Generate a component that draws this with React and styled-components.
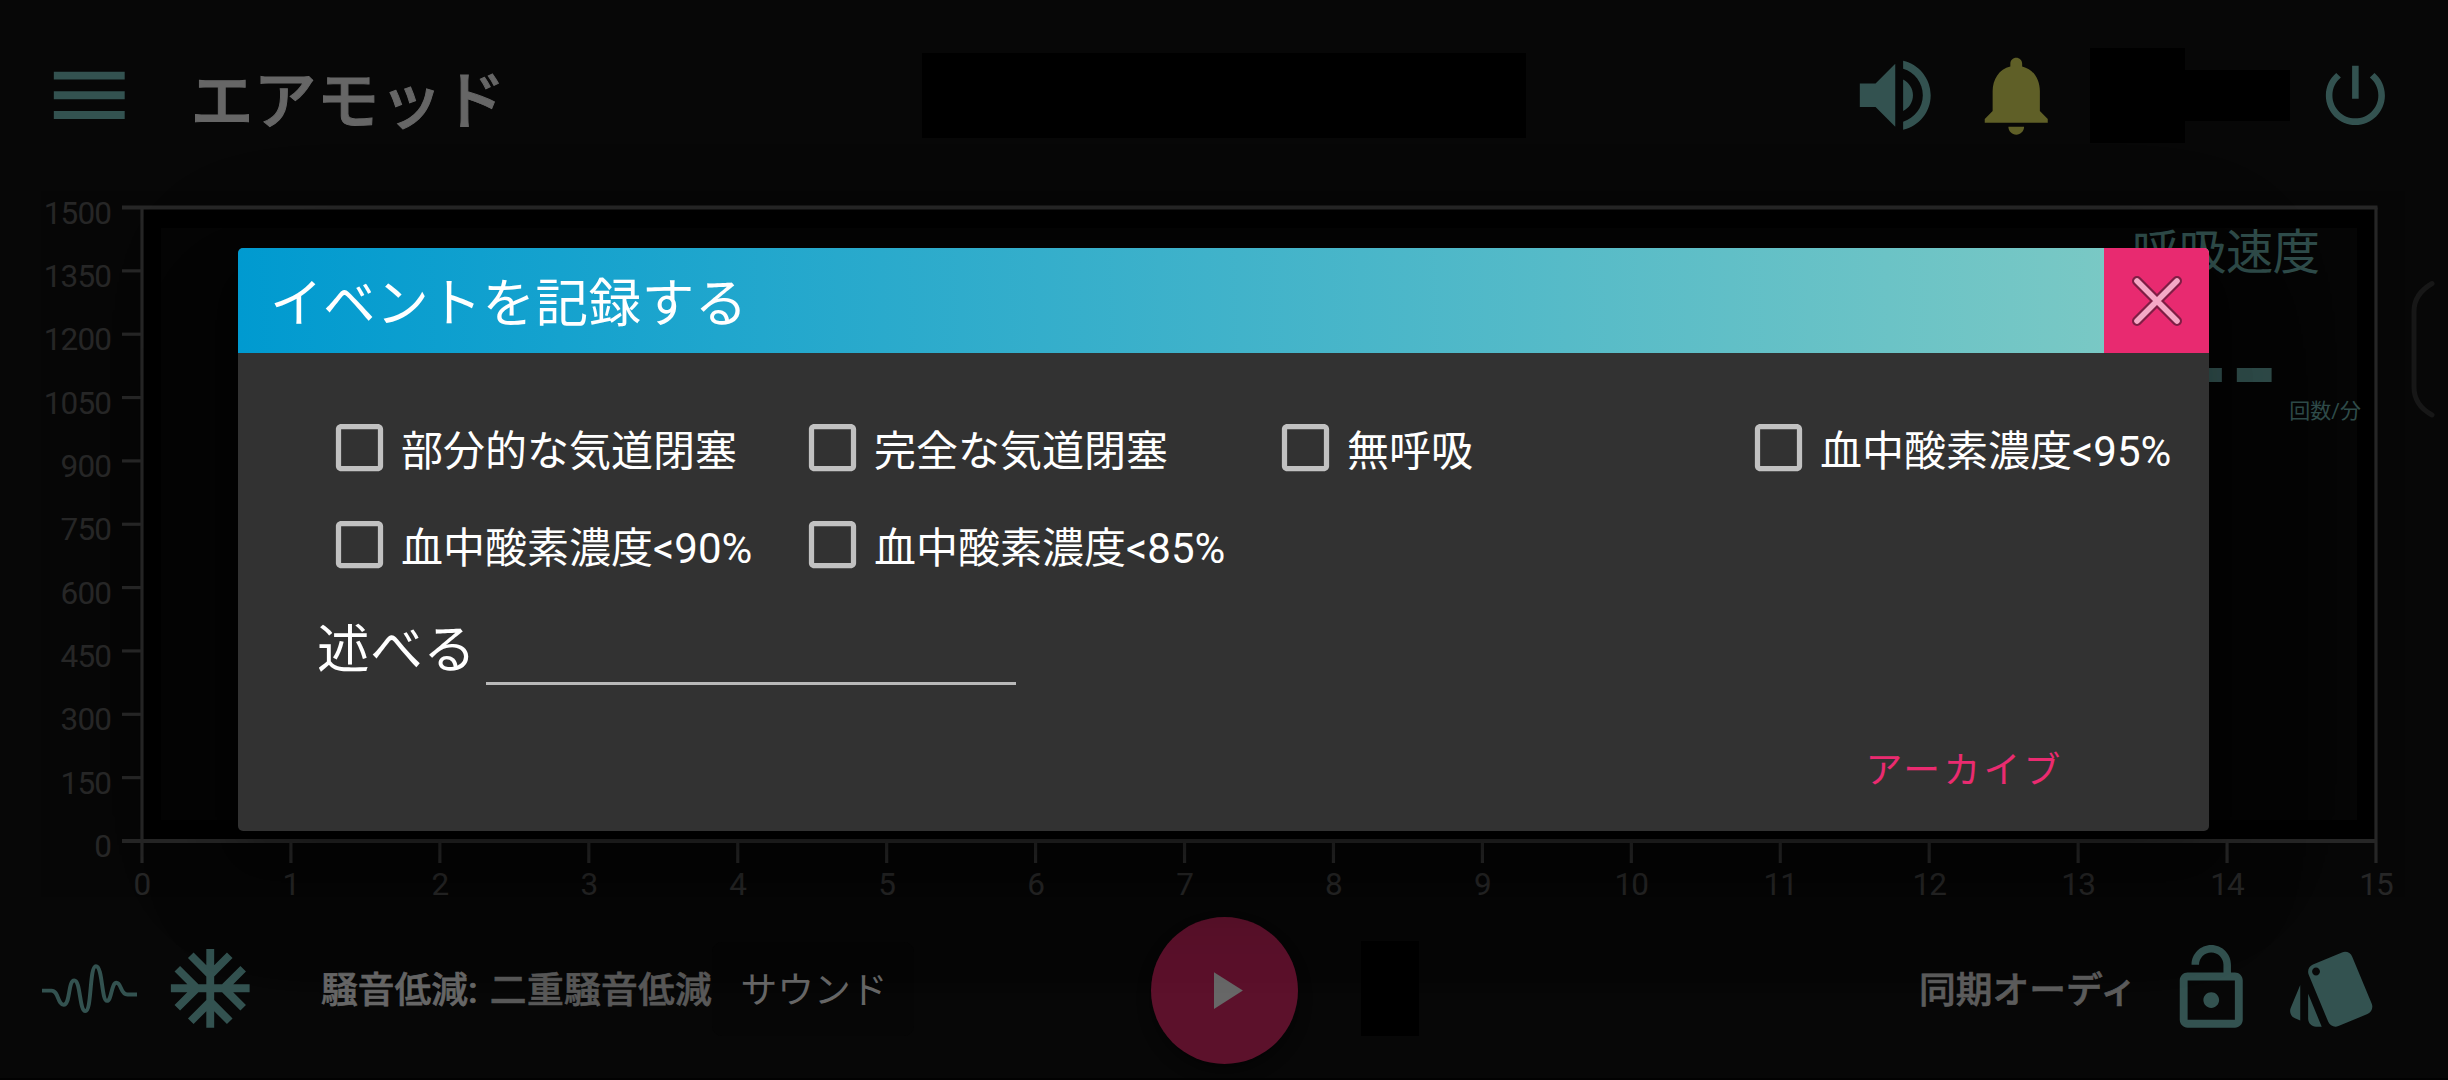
import React from "react";
import styled, { createGlobalStyle } from "styled-components";

const TEAL = "#335250";
const AXIS = "#262626";

const GlobalStyle = createGlobalStyle`
  * { box-sizing: border-box; }
  body {
    margin: 0;
    background: #070707;
    font-family: Roboto, "Noto Sans CJK JP", sans-serif;
    overflow: hidden;
  }
`;

const Screen = styled.div`
  position: relative;
  display: flex;
  flex-direction: column;
  width: 2448px;
  height: 1080px;
  background: #070707;
  border-bottom: 2px solid #020202;
  overflow: hidden;
`;

const Icon = styled.svg.attrs({ viewBox: "0 0 24 24" })`
  display: block;
  flex: none;
  width: ${(p) => p.$size || 94.5}px;
  height: ${(p) => p.$size || 94.5}px;
  margin-left: ${(p) => p.$gap || 0}px;
  fill: ${(p) => p.$color || TEAL};
`;

const TopBar = styled.header`
  display: flex;
  align-items: center;
  height: 191px;
  padding-left: 42px;
`;

const AppTitle = styled.h1`
  width: 731px;
  margin: 0 0 0 54px;
  padding-top: 12px;
  font-size: 63px;
  line-height: 90px;
  font-weight: 500;
  -webkit-text-stroke: 1px #666;
  color: #666;
  white-space: nowrap;
`;

const Blank = styled.div`
  flex: none;
  width: ${(p) => p.$w}px;
  height: ${(p) => p.$h}px;
  margin-left: ${(p) => p.$gap || 0}px;
  background: #000;
`;

const ChartArea = styled.section`
  position: relative;
  height: 706px;
`;

const ChartSvg = styled.svg`
  display: block;
  width: 2448px;
  height: 706px;
  overflow: visible;
  font-size: 31.5px;
  font-weight: 400;
  letter-spacing: -0.9px;
`;

const Readout = styled.div`
  position: absolute;
  top: 27px;
  right: 87px;
  width: 230px;
  color: #2f4c4a;
`;

const ReadoutName = styled.div`
  padding-left: 1px;
  font-size: 47.25px;
  line-height: 70px;
  font-weight: 400;
  letter-spacing: -0.3px;
  white-space: nowrap;
`;

const ReadoutValue = styled.div`
  padding: 20px 0 0 49px;
  font-size: 126px;
  line-height: 126px;
  font-weight: 700;
`;

const ReadoutUnit = styled.div`
  margin-top: -38px;
  text-align: right;
  font-size: 21px;
  line-height: 30px;
`;

const Drawer = styled.svg`
  position: absolute;
  left: 2406px;
  top: 275px;
  width: 32px;
  height: 150px;
`;

const BottomBar = styled.footer`
  display: flex;
  align-items: center;
  height: 181px;
  padding: 2px 0 0 42px;
`;

const StatusText = styled.div`
  flex: none;
  width: ${(p) => p.$w}px;
  margin-left: ${(p) => p.$gap}px;
  padding-top: 5px;
  font-size: 36.75px;
  line-height: 54px;
  font-weight: 500;
  -webkit-text-stroke: 0.7px currentColor;
  color: ${(p) => p.$color || "#5c5c5c"};
  white-space: nowrap;
`;

const StatusValue = styled.span`
  margin-left: 3px;
  letter-spacing: 0.3px;
  color: #585858;
`;

const SoundButton = styled.button`
  flex: none;
  width: 202px;
  height: 94px;
  margin-left: 0;
  padding: 5px 0 0 2px;
  border: 0;
  border-radius: 10px;
  background: #060606;
  font: 400 36.75px/54px Roboto, "Noto Sans CJK JP", sans-serif;
  color: #666;
  white-space: nowrap;
`;

const PlayButton = styled.button`
  display: flex;
  align-items: center;
  justify-content: center;
  flex: none;
  width: 147px;
  height: 147px;
  margin: 4px 0 0 237px;
  padding: 0;
  border: 0;
  border-radius: 50%;
  background: #5c112b;
  box-shadow: 0 8px 14px rgba(0, 0, 0, 0.4);
`;

const Overlay = styled.div`
  position: absolute;
  inset: 0;
  display: flex;
  align-items: flex-start;
  justify-content: center;
  padding: 248px 1px 0 0;
`;

const Dialog = styled.div`
  display: flex;
  flex-direction: column;
  width: 1971px;
  height: 583px;
  border-radius: 5px;
  background: #323232;
  overflow: hidden;
  box-shadow: 0 29px 39px -18px rgba(0, 0, 0, 0.2),
    0 63px 100px 8px rgba(0, 0, 0, 0.14), 0 24px 121px 21px rgba(0, 0, 0, 0.12);
`;

const DialogHeader = styled.div`
  display: flex;
  align-items: center;
  justify-content: space-between;
  flex: none;
  height: 105px;
  padding-left: 32px;
  background: linear-gradient(88deg, #009ad0 0%, #80cbc4 100%);
`;

const DialogTitle = styled.h2`
  margin: 0;
  padding-top: 7px;
  font-size: 52.5px;
  line-height: 84px;
  font-weight: 400;
  letter-spacing: 0.6px;
  color: #fff;
`;

const CloseButton = styled.button`
  display: flex;
  align-items: center;
  justify-content: center;
  width: 105px;
  height: 105px;
  padding: 0;
  border: 0;
  background: #e82a70;
`;

const CloseIcon = styled.svg`
  display: block;
  width: 60px;
  height: 60px;
`;

const DialogBody = styled.div`
  display: flex;
  flex-direction: column;
  flex: 1;
  padding: 47px 0 0 79px;
  color: #fff;
`;

const OptionGrid = styled.div`
  display: grid;
  grid-template-columns: repeat(4, 473px);
  grid-auto-rows: 97px;
`;

const Option = styled.label`
  display: flex;
  align-items: center;
  height: 95px;
  padding-left: 10.5px;
  font-size: 42px;
  line-height: 60px;
  white-space: nowrap;
`;

const OptionText = styled.span`
  padding: 8px 0 0 10.5px;
`;

const DescribeRow = styled.div`
  display: flex;
  align-items: flex-start;
  height: 92px;
`;

const DescribeLabel = styled.div`
  width: 169px;
  padding-top: 18px;
  font-size: 52.5px;
  line-height: 76px;
  letter-spacing: 0.0125em;
  white-space: nowrap;
`;

const DescribeInput = styled.input`
  width: 530px;
  height: 91px;
  padding: 0;
  border: 0;
  border-bottom: 3px solid #b9b9b9;
  background: transparent;
  color: #fff;
  font-size: 42px;
  outline: none;
`;

const Actions = styled.div`
  display: flex;
  justify-content: flex-end;
  padding: 58px 145.5px 0 0;
`;

const ArchiveButton = styled.button`
  padding: 0;
  border: 0;
  background: transparent;
  font: 400 36.75px/54px Roboto, "Noto Sans CJK JP", sans-serif;
  letter-spacing: 0.0892857em;
  color: #ea2b70;
`;

const OPTIONS = [
  "部分的な気道閉塞",
  "完全な気道閉塞",
  "無呼吸",
  "血中酸素濃度<95%",
  "血中酸素濃度<90%",
  "血中酸素濃度<85%",
];

const X0 = 142;
const X1 = 2376;
const Y0 = 650;
const Y1 = 16.5;

function Chart() {
  const xs = Array.from({ length: 16 }, (_, i) => X0 + (i * (X1 - X0)) / 15);
  const ys = Array.from({ length: 11 }, (_, i) => Y0 - (i * (Y0 - Y1)) / 10);
  return (
    <ChartSvg viewBox="0 0 2448 706">
      <rect x="41" y="0" width="2364" height="706" fill="#060606" />
      <rect x={X0} y={Y1} width={X1 - X0} height={Y0 - Y1} fill="#000" />
      <rect x="161" y="37" width="2196" height="592" fill="#050505" />
      <g stroke={AXIS} strokeWidth="3.2">
        <path d={`M${X0} ${Y1}V672M${X1} ${Y1}V672`} />
        <path d={`M122 ${Y1}H${X1 + 1.5}M122 ${Y0}H${X1}`} strokeWidth="3.8" />
        {xs.slice(1, 15).map((x) => (
          <path key={x} d={`M${x} ${Y0}V672`} />
        ))}
        {ys.slice(1, 10).map((y) => (
          <path key={y} d={`M122 ${y}H${X0}`} />
        ))}
      </g>
      <g fill={AXIS}>
        {ys.map((y, i) => (
          <text key={i} x="111" y={y + 16} textAnchor="end">
            {i * 150}
          </text>
        ))}
        {xs.map((x, i) => (
          <text key={i} x={x} y="704" textAnchor="middle">
            {i}
          </text>
        ))}
      </g>
    </ChartSvg>
  );
}

export default function App() {
  return (
    <>
      <GlobalStyle />
      <Screen>
        <TopBar>
          <Icon>
            <path d="M3 18h18v-2H3v2zm0-5h18v-2H3v2zm0-7v2h18V6H3z" />
          </Icon>
          <AppTitle>エアモッド</AppTitle>
          <Blank $w={604} $h={85} />
          <Icon $gap={322.5}>
            <path d="M3 9v6h4l5 5V4L7 9H3zm13.500 3c0-1.770-1.020-3.290-2.500-4.030v8.050c1.480-.730 2.500-2.250 2.500-4.020zM14 3.230v2.060c2.890.860 5 3.540 5 6.710s-2.110 5.850-5 6.710v2.060c4.010-.910 7-4.490 7-8.770s-2.990-7.860-7-8.770z" />
          </Icon>
          <Icon $gap={26.5} $color="#5f5f27">
            <path d="M12 22c1.100 0 2-.900 2-2h-4c0 1.100.890 2 2 2zm6-6v-5c0-3.070-1.640-5.640-4.500-6.320V4c0-.830-.670-1.500-1.500-1.500s-1.500.670-1.500 1.500v.680C7.630 5.360 6 7.920 6 11v5l-2 2v1h16v-1l-2-2z" />
          </Icon>
          <Blank $w={95} $h={95} $gap={26} />
          <Blank $w={105} $h={51} />
          <Icon $size={78.75} $gap={26}>
            <path d="M13 3h-2v10h2V3zm4.830 2.170l-1.420 1.420C17.990 7.860 19 9.810 19 12c0 3.870-3.130 7-7 7s-7-3.130-7-7c0-2.190 1.010-4.140 2.580-5.420L6.170 5.170C4.230 6.820 3 9.260 3 12c0 4.970 4.030 9 9 9s9-4.030 9-9c0-2.740-1.230-5.180-3.170-6.830z" />
          </Icon>
        </TopBar>

        <ChartArea>
          <Chart />
          <Readout>
            <ReadoutName>呼吸速度</ReadoutName>
            <ReadoutValue>--</ReadoutValue>
            <ReadoutUnit>回数/分</ReadoutUnit>
          </Readout>
        </ChartArea>

        <BottomBar>
          <Icon>
            <path
              d="M0.400 12.600H2.700C4.500 12.600 4.300 16.200 5.800 16.200C7.500 16.200 6.900 10 8.500 10C10.100 10 9.800 17.800 11.300 17.800C13 17.800 12.300 6.400 14 6.400C15.700 6.400 15.400 15.200 16.800 15.200C18 15.200 17.900 10.600 19.200 10.600C20.500 10.600 20.200 13.600 22 13.600H24.300"
              transform="translate(-0.300 0)"
              fill="none"
              stroke={TEAL}
              strokeWidth="1"
              strokeLinecap="round"
            />
          </Icon>
          <Icon $gap={26}>
            <path d="M22 11h-4.170l3.240-3.240-1.410-1.420L15 11h-2V9l4.660-4.660-1.420-1.410L13 6.170V2h-2v4.170L7.760 2.930 6.340 4.340 11 9v2H9L4.340 6.340 2.930 7.760 6.170 11H2v2h4.170l-3.240 3.240 1.410 1.420L9 13h2v2l-4.660 4.660 1.420 1.410L11 17.830V22h2v-4.170l3.240 3.240 1.420-1.410L13 15v-2h2l4.660 4.660 1.410-1.420L17.830 13H22z" />
          </Icon>
          <StatusText $w={391} $gap={64} $color="#666">
            騒音低減: <StatusValue>二重騒音低減</StatusValue>
          </StatusText>
          <SoundButton>サウンド</SoundButton>
          <PlayButton>
            <Icon $size={63} $color="#676767">
              <path d="M8 5v14l11-7z" />
            </Icon>
          </PlayButton>
          <Blank $w={58} $h={95} $gap={63} />
          <StatusText $w={223} $gap={500}>
            同期オーディ
          </StatusText>
          <Icon $gap={22}>
            <path d="M12 17c1.100 0 2-.900 2-2s-.900-2-2-2-2 .900-2 2 .900 2 2 2zm6-9h-1V6c0-2.760-2.240-5-5-5S7 3.240 7 6h1.900c0-1.710 1.390-3.100 3.100-3.100 1.710 0 3.100 1.390 3.100 3.100v2H6c-1.100 0-2 .900-2 2v10c0 1.100.900 2 2 2h12c1.100 0 2-.900 2-2V10c0-1.100-.900-2-2-2zm0 12H6V10h12v10z" />
          </Icon>
          <Icon $gap={26}>
            <path d="M2.530 19.650l1.340.560v-9.030l-2.430 5.860c-.410 1.020.080 2.190 1.090 2.610zm19.500-3.700L17.070 3.980c-.310-.750-1.040-1.210-1.810-1.230-.260 0-.530.040-.790.150L7.100 5.950c-.750.310-1.210 1.030-1.230 1.800-.010.270.040.540.150.800l4.960 11.970c.310.760 1.050 1.220 1.830 1.230.260 0 .520-.050.770-.150l7.360-3.050c1.020-.420 1.510-1.590 1.090-2.600zM7.880 8.750c-.550 0-1-.450-1-1s.450-1 1-1 1 .450 1 1-.450 1-1 1zm-2 11c0 1.100.900 2 2 2h1.450l-3.450-8.340v6.340z" />
          </Icon>
        </BottomBar>

        <Drawer viewBox="0 0 32 150">
          <path
            d="M26 8.500C15 15 8 23 8 36V112C8 125 15 134 26 140"
            fill="none"
            stroke="#171717"
            strokeWidth="5"
            strokeLinecap="round"
          />
        </Drawer>

        <Overlay>
          <Dialog>
            <DialogHeader>
              <DialogTitle>イベントを記録する</DialogTitle>
              <CloseButton>
                <CloseIcon viewBox="0 0 60 60" fill="none" strokeLinecap="round">
                  <path d="M10 10L50 50M50 10L10 50" stroke="#7f1e45" strokeWidth="10" />
                  <path d="M10 10L50 50M50 10L10 50" stroke="#f5a9c6" strokeWidth="5.600" />
                </CloseIcon>
              </CloseButton>
            </DialogHeader>
            <DialogBody>
              <OptionGrid>
                {OPTIONS.map((name) => (
                  <Option key={name}>
                    <Icon $size={63} $color="#c1c1c1">
                      <path d="M19 5v14H5V5h14m0-2H5c-1.100 0-2 .900-2 2v14c0 1.100.900 2 2 2h14c1.100 0 2-.900 2-2V5c0-1.100-.900-2-2-2z" />
                    </Icon>
                    <OptionText>{name}</OptionText>
                  </Option>
                ))}
              </OptionGrid>
              <DescribeRow>
                <DescribeLabel>述べる</DescribeLabel>
                <DescribeInput />
              </DescribeRow>
              <Actions>
                <ArchiveButton>アーカイブ</ArchiveButton>
              </Actions>
            </DialogBody>
          </Dialog>
        </Overlay>
      </Screen>
    </>
  );
}
